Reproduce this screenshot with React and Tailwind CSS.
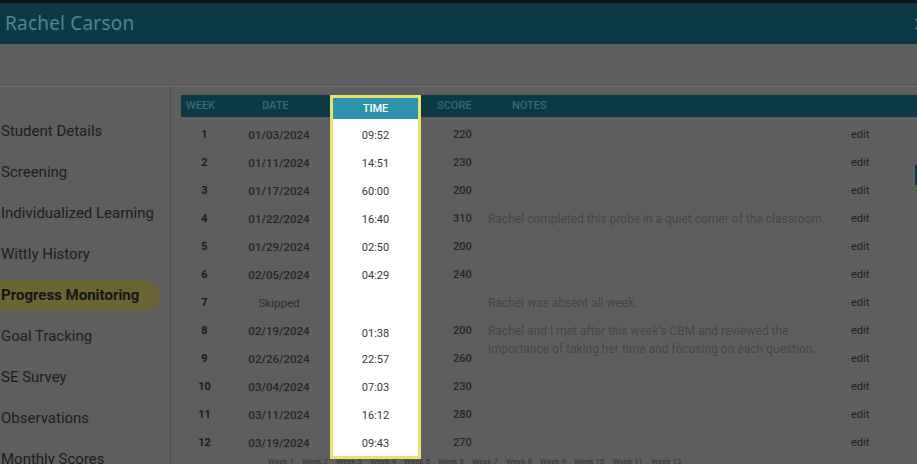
import { X } from 'lucide-react'

const NAV = [
    'Student Details',
    'Screening',
    'Individualized Learning',
    'Wittly History',
    'Progress Monitoring',
    'Goal Tracking',
    'SE Survey',
    'Observations',
    'Monthly Scores',
]

const ROWS = [
    { week: 1, date: '01/03/2024', time: '09:52', score: 220, notes: '' },
    { week: 2, date: '01/11/2024', time: '14:51', score: 230, notes: '' },
    { week: 3, date: '01/17/2024', time: '60:00', score: 200, notes: '' },
    { week: 4, date: '01/22/2024', time: '16:40', score: 310, notes: ['Rachel completed this probe in a quiet corner of the classroom.'] },
    { week: 5, date: '01/29/2024', time: '02:50', score: 200, notes: '' },
    { week: 6, date: '02/05/2024', time: '04:29', score: 240, notes: '' },
    { week: 7, date: 'Skipped', time: '', score: '', notes: ['Rachel was absent all week.'] },
    {
        week: 8, date: '02/19/2024', time: '01:38', score: 200,
        notes: ['Rachel and I met after this week\u2019s CBM and reviewed the', 'importance of taking her time and focusing on each question.'],
    },
    { week: 9, date: '02/26/2024', time: '22:57', score: 260, notes: '' },
    { week: 10, date: '03/04/2024', time: '07:03', score: 230, notes: '' },
    { week: 11, date: '03/11/2024', time: '16:12', score: 280, notes: '' },
    { week: 12, date: '03/19/2024', time: '09:43', score: 270, notes: '' },
]

const cell = 'h-[28px] pt-[9px] leading-[18px] whitespace-nowrap'
const head = 'h-[22px] bg-[#0c3a44] text-[#3b6870] text-[11px] font-medium leading-[22px]'

export default function App() {
    return (
        <div className="w-[917px] h-[464px] overflow-hidden bg-[#5e5e5e] font-['Roboto','Liberation_Sans',sans-serif] text-[11px]">
            <div className="h-[3px] bg-[#121212]" />

            {/* Header */}
            <header className="h-[41px] bg-[#0c3944] flex items-center justify-between pl-[5px]">
                <h1 className="font-['Noto_Sans','Open_Sans',sans-serif] text-[19px] text-[#4d868e] tracking-[0.2px]">
                    Rachel Carson
                </h1>
                <X size={18} strokeWidth={2.5} className="text-[#4a818a] translate-x-[13px]" />
            </header>

            <div className="h-[43px] border-b border-[#707070]" />

            <div className="flex">
                {/* Sidebar */}
                <aside className="w-[171px] shrink-0 border-r border-[#4b4b4b] pt-[24px] h-[400px] text-[15px] text-[#1d1d1d]">
                    {NAV.map((item) => (
                        <div key={item} className="h-[41px] flex items-center">
                            {item === 'Progress Monitoring' ? (
                                <span className="w-[160px] h-[31px] flex items-center pl-[1px] rounded-r-full bg-[#6b6433] font-bold text-[#161616]">
                                    {item}
                                </span>
                            ) : (
                                <span className="pl-[1px]">{item}</span>
                            )}
                        </div>
                    ))}
                </aside>

                {/* Progress table */}
                <main className="relative flex-1 pl-[10px] pt-[8px]">
                    <div className="flex">
                        <div className="w-[47px] shrink-0">
                            <div className={`${head} pl-[5px]`}>WEEK</div>
                            {ROWS.map((r) => (
                                <div key={r.week} className={`${cell} text-center font-bold text-[#1b1b1b]`}>{r.week}</div>
                            ))}
                        </div>

                        <div className="w-[102px] shrink-0">
                            <div className={`${head} pl-[34px]`}>DATE</div>
                            {ROWS.map((r) => (
                                <div
                                    key={r.week}
                                    className={`${cell} text-center text-[11.5px] ${r.date === 'Skipped' ? 'text-[#2e2e2e]' : 'font-medium text-[#262626]'}`}
                                >
                                    {r.date}
                                </div>
                            ))}
                        </div>

                        {/* Highlighted TIME column */}
                        <div className="relative z-10 w-[91px] shrink-0 h-[364px] border-[3px] border-[#e7e46d] bg-white">
                            <div className="h-[21px] bg-[#2d92aa] text-white text-center font-medium leading-[21px]">TIME</div>
                            {ROWS.map((r) => (
                                <div
                                    key={r.week}
                                    className={`h-[28px] leading-[18px] text-center text-[#383838] ${r.week === 8 ? 'pt-[10px]' : 'pt-[8px]'}`}
                                >
                                    {r.time}
                                </div>
                            ))}
                        </div>

                        <div className="w-[67px] shrink-0">
                            <div className={`${head} pl-[16px]`}>SCORE</div>
                            {ROWS.map((r) => (
                                <div key={r.week} className={`${cell} pl-[32px] font-medium text-[#262626]`}>{r.score}</div>
                            ))}
                        </div>

                        <div className="flex-1">
                            <div className={`${head} pl-[24px]`}>NOTES</div>
                            {ROWS.map((r) => (
                                <div key={r.week} className={`${cell} text-[12px] text-[#464646]`}>
                                    {r.notes && r.notes.map((line) => <div key={line}>{line}</div>)}
                                </div>
                            ))}
                        </div>

                        <div className="w-[77px] shrink-0">
                            <div className={head} />
                            {ROWS.map((r) => (
                                <div key={r.week} className={`${cell} pl-[11px] text-[#1e1e1e]`}>edit</div>
                            ))}
                        </div>
                    </div>

                    {/* chart axis peeking below */}
                    <div className="-mt-[2px] pl-[87px] flex gap-[8px] text-[8px] text-[#333333] leading-[10px]">
                        {Array.from({ length: 12 }, (_, i) => (
                            <span key={i}>Week {i + 1}</span>
                        ))}
                    </div>

                    <div className="absolute right-0 top-[78px] w-[2px] h-[20px] bg-[#0c3a44]" />
                </main>
            </div>
        </div>
    )
}
